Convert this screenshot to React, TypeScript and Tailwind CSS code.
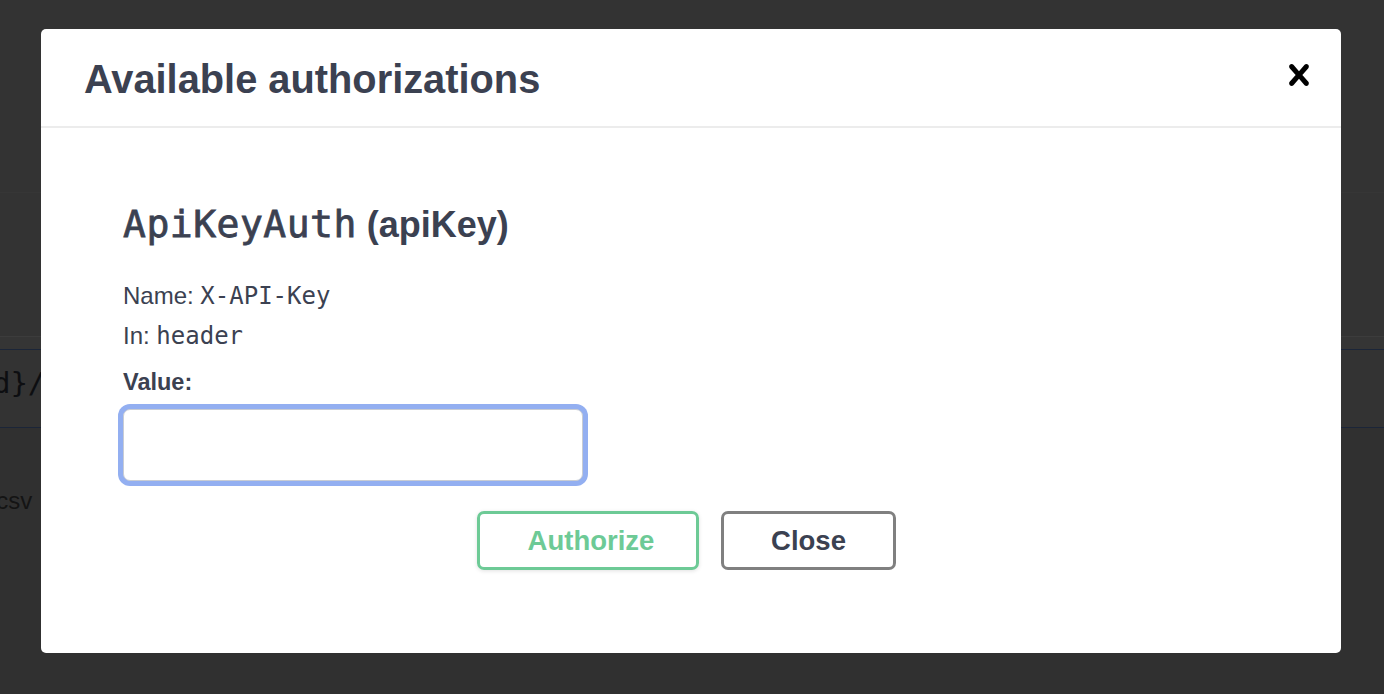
import React from "react";

const SANS = "font-['Liberation_Sans',Arial,sans-serif]";

export default function App() {
  return (
    <div className={`relative w-[1384px] h-[694px] overflow-hidden bg-[#333333] ${SANS}`}>
      {/* dimmed page underneath */}
      <div className="flex flex-col h-full">
        <div className="h-[192px] bg-[#333333]" />
        <div className="h-[144px] bg-[#333333] border-t border-[#363636]" />
        <div className="h-[13px] bg-[#353535] border-t border-[#3c3c3c]" />
        <div className="h-[79px] bg-[#333333] border-y border-[#1b2538] flex items-center">
          <span className="ml-[-42px] mb-[10px] whitespace-nowrap font-['DejaVu_Sans_Mono',monospace] text-[29px] leading-none text-[#0d0e11]">
            {"{id}/"}
          </span>
        </div>
        <div className="flex-1 bg-[#303030] pt-[61px]">
          <span className="block ml-[-49px] whitespace-nowrap text-[24px] leading-none text-[#141414]">
            text/csv
          </span>
        </div>
      </div>

      {/* modal */}
      <div className="absolute left-[41px] top-[29px] w-[1300px] h-[624px] rounded-[5px] bg-white flex flex-col">
        <div className="h-[99px] border-b-2 border-[#ececec] flex items-center justify-between pl-[43px] pr-[21px] pt-[2px]">
          <h3 className="text-[39.8px] leading-[40px] font-bold text-[#3b4151]">Available authorizations</h3>
          <button className="mb-[8px] w-[42px] h-[42px] flex items-center justify-center">
            <svg width="42" height="42" viewBox="0 0 20 20" fill="#000">
              <path d="M14.348 14.849c-.469.469-1.229.469-1.697 0L10 11.819l-2.651 3.029c-.469.469-1.229.469-1.697 0-.469-.469-.469-1.229 0-1.697l2.758-3.15-2.759-3.152c-.469-.469-.469-1.228 0-1.697.469-.469 1.228-.469 1.697 0L10 8.183l2.651-3.031c.469-.469 1.228-.469 1.697 0 .469.469.469 1.229 0 1.697l-2.758 3.152 2.758 3.15c.469.469.469 1.229 0 1.698z" />
            </svg>
          </button>
        </div>

        <div className="flex-1 px-[82px] pt-[74px] text-[#3b4151]">
          <div className="text-[36px] leading-[44px] font-bold">
            <span className="font-['DejaVu_Sans_Mono',monospace] font-normal text-[38px] tracking-[0.5px] [-webkit-text-stroke:0.8px]">
              ApiKeyAuth
            </span>{" "}
            (apiKey)
          </div>
          <div className="mt-[29px] text-[24px] leading-[40px]">
            Name: <span className="font-['DejaVu_Sans_Mono',monospace]">X-API-Key</span>
          </div>
          <div className="text-[24px] leading-[40px]">
            In: <span className="font-['DejaVu_Sans_Mono',monospace]">header</span>
          </div>
          <div className="mt-[6px] text-[23.5px] leading-[40px] font-bold">Value:</div>
          <input
            type="text"
            className="mt-[7px] block w-[460px] h-[72px] rounded-[7px] border border-[#c8ccd4] bg-white ring-[5px] ring-[#93aff1] outline-none"
          />
          <div className="mt-[30px] flex justify-center gap-[22px] pr-[9px]">
            <button className="w-[222px] h-[59px] rounded-[7px] border-[3px] border-[#6dca96] pl-[6px] text-[#6dca96] text-[27.5px] font-bold leading-none shadow-[0_1px_4px_rgba(0,0,0,0.12)]">
              Authorize
            </button>
            <button className="w-[175px] h-[59px] rounded-[7px] border-[3px] border-[#808080] text-[#3b4151] text-[27.5px] font-bold leading-none">
              Close
            </button>
          </div>
        </div>
      </div>
    </div>
  );
}
